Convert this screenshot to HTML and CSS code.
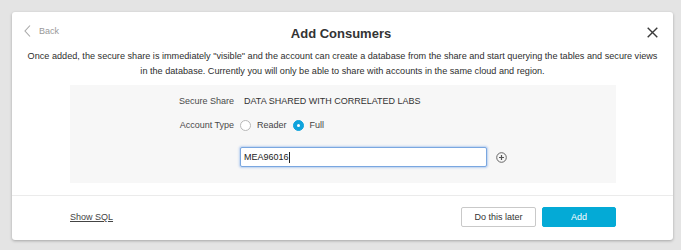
FILE: index.html
```html
<!DOCTYPE html>
<html lang="en">
<head>
<meta charset="utf-8">
<title>Add Consumers</title>
<link rel="stylesheet" href="styles.css">
</head>
<body>
<div class="modal">
  <div class="modal-header">
    <a class="back" href="#">
      <svg class="back-icon" width="7" height="12" viewBox="0 0 7 12"><polyline points="6,0.5 1,6 6,11.5" fill="none" stroke="#a8a8a8" stroke-width="1.1"/></svg>
      <span>Back</span>
    </a>
    <h1 class="title">Add Consumers</h1>
    <button class="close" aria-label="Close">
      <svg width="11" height="11" viewBox="0 0 11 11"><path d="M0.7 0.7 L10.3 10.3 M10.3 0.7 L0.7 10.3" stroke="#3a3a3a" stroke-width="1.4" fill="none"/></svg>
    </button>
  </div>
  <p class="desc">Once added, the secure share is immediately "visible" and the account can create a database from the share and start querying the tables and secure views<br>in the database. Currently you will only be able to share with accounts in the same cloud and region.</p>
  <div class="panel">
    <div class="label">Secure Share</div>
    <div class="value">DATA SHARED WITH CORRELATED LABS</div>
    <div class="label">Account Type</div>
    <div class="radios">
      <span class="radio"></span><span class="radio-text">Reader</span>
      <span class="radio checked"></span><span class="radio-text">Full</span>
    </div>
    <div class="input-row">
      <div class="input"><span>MEA96016</span><span class="caret"></span></div>
      <svg class="plus" width="11" height="11" viewBox="0 0 11 11"><circle cx="5.5" cy="5.5" r="4.8" fill="none" stroke="#666" stroke-width="1"/><path d="M5.5 3 V8 M3 5.5 H8" stroke="#555" stroke-width="1.2"/></svg>
    </div>
  </div>
  <div class="footer">
    <a class="show-sql" href="#">Show SQL</a>
    <div class="actions">
      <button class="btn btn-secondary">Do this later</button>
      <button class="btn btn-primary">Add</button>
    </div>
  </div>
</div>
</body>
</html>
```
FILE: styles.css
```css
* { box-sizing: border-box; }
html, body { margin: 0; }
body {
  background: #e4e4e4;
  padding: 12px 0 0 12px;
  font-family: "Liberation Sans", Arial, sans-serif;
  font-size: 9px;
  color: #333;
  height: 250px;
}
.modal {
  width: 661px;
  height: 228px;
  background: #fff;
  border-radius: 3px;
  box-shadow: 0 1px 3px rgba(0,0,0,0.28);
  display: flex;
  flex-direction: column;
}
.modal-header {
  display: grid;
  grid-template-columns: 1fr auto 1fr;
  align-items: start;
  height: 37px;
  padding: 0 15px 0 12px;
}
.back {
  display: flex;
  align-items: center;
  gap: 8px;
  margin-top: 13px;
  height: 12px;
  color: #999;
  text-decoration: none;
  font-size: 9px;
}
.title {
  margin: 12px 0 0;
  font-size: 13px;
  line-height: 20px;
  font-weight: bold;
  color: #333;
}
.close {
  justify-self: end;
  margin-top: 15px;
  padding: 0;
  border: 0;
  background: none;
  width: 11px;
  height: 11px;
  display: block;
}
.close svg { display: block; }
.desc {
  margin: 0;
  padding: 0 4px;
  text-align: center;
  line-height: 15px;
  font-size: 9.15px;
  color: #2e2e2e;
  white-space: nowrap;
}
.panel {
  margin: 6px 57px 0 58px;
  height: 98px;
  background: #f7f7f7;
  padding: 8px 0 16px;
  display: grid;
  grid-template-columns: 164px 1fr;
  column-gap: 6px;
  row-gap: 8px;
  align-items: center;
}
.label {
  text-align: right;
  line-height: 16px;
  color: #4a4a4a;
}
.value {
  padding-left: 4px;
  line-height: 16px;
  color: #333;
}
.radios {
  display: flex;
  align-items: center;
  height: 16px;
}
.radio {
  width: 11px;
  height: 11px;
  border-radius: 50%;
  border: 1px solid #b8b8b8;
  background: #fff;
  position: relative;
}
.radio.checked {
  border-color: #0fa3dc;
  background: #0fa3dc;
}
.radio.checked::after {
  content: "";
  position: absolute;
  left: 3px;
  top: 3px;
  width: 3px;
  height: 3px;
  border-radius: 50%;
  background: #fff;
}
.radio-text { margin: 0 6px 0 6px; color: #444; }
.input-row {
  grid-column: 2;
  margin-top: 6px;
  display: flex;
  align-items: center;
  gap: 9px;
}
.input {
  width: 247px;
  height: 20px;
  border: 1px solid #7aa7e0;
  border-radius: 2px;
  box-shadow: 0 0 2px 1px rgba(110,160,230,0.45);
  background: #fff;
  padding-left: 3px;
  display: flex;
  align-items: center;
  color: #222;
}
.caret {
  width: 1px;
  height: 11px;
  background: #222;
}
.plus { display: block; }
.footer {
  margin-top: 12px;
  border-top: 1px solid #ebebeb;
  padding: 11px 57px 0 58px;
  display: flex;
  justify-content: space-between;
  align-items: flex-start;
}
.show-sql {
  color: #444;
  text-decoration: underline;
  line-height: 20px;
}
.actions { display: flex; gap: 6px; }
.btn {
  height: 20px;
  border-radius: 2px;
  font-family: "Liberation Sans", Arial, sans-serif;
  font-size: 9px;
  padding: 0;
}
.btn-secondary {
  width: 75px;
  background: #fff;
  border: 1px solid #c9c9c9;
  color: #333;
}
.btn-primary {
  width: 74px;
  background: #04aad6;
  border: 1px solid #04aad6;
  color: #fff;
}
```
